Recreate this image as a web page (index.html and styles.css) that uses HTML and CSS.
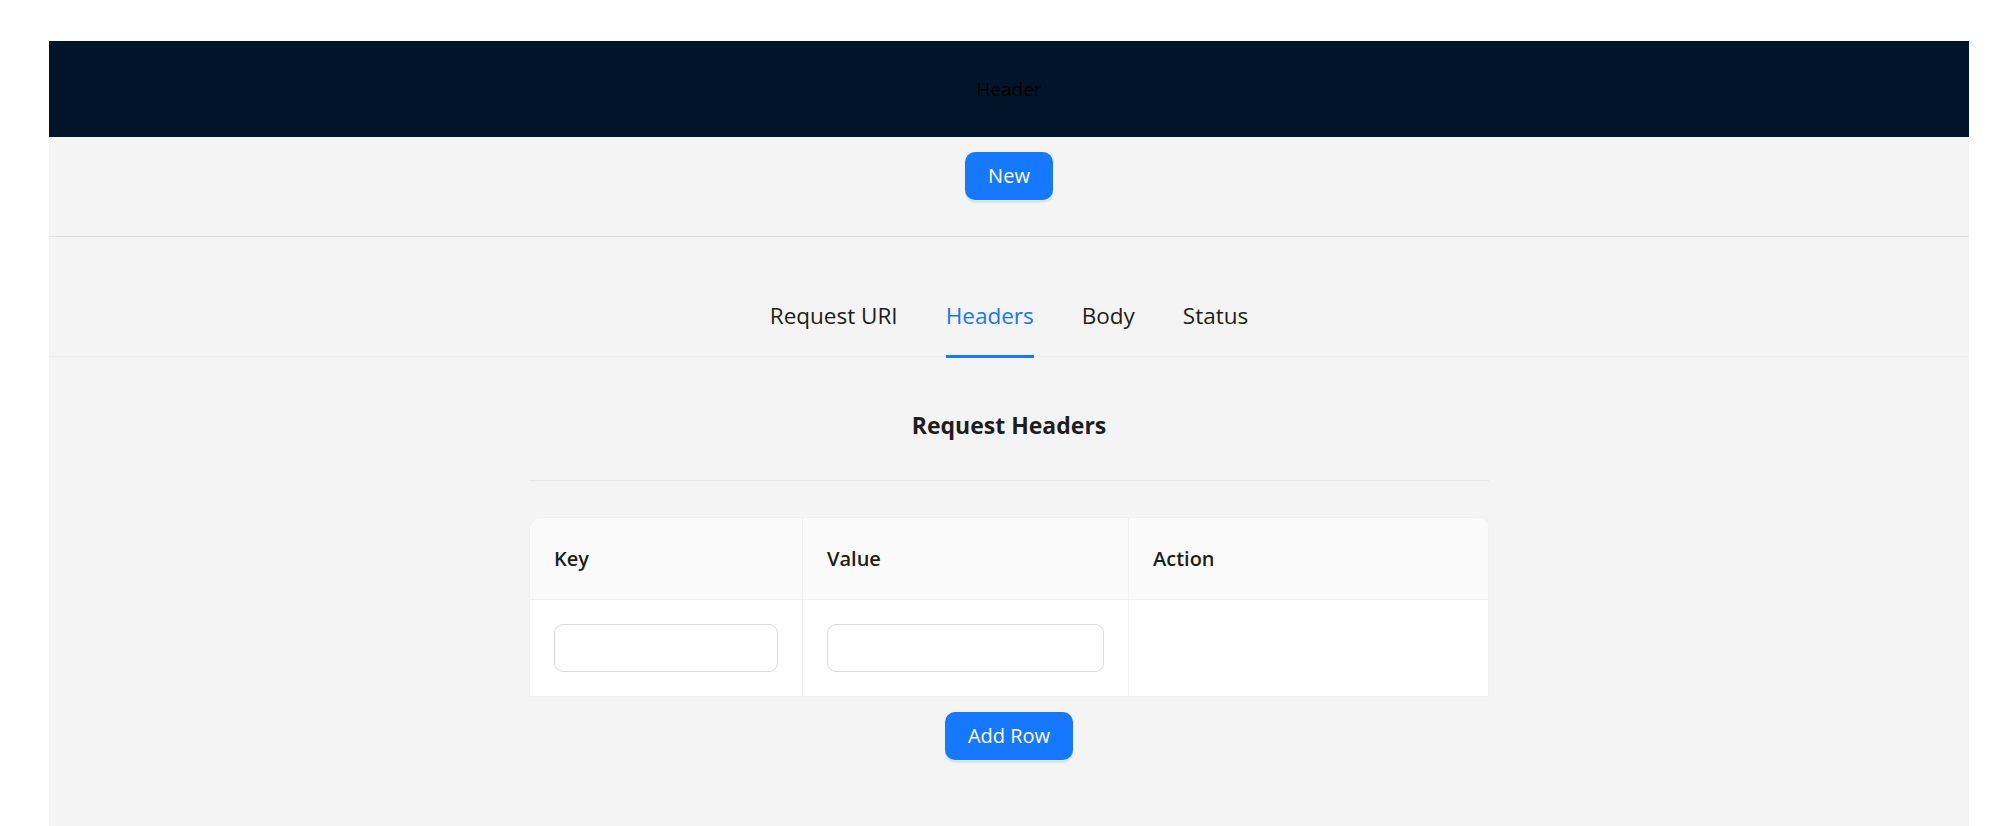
FILE: index.html
```html
<!DOCTYPE html>
<html lang="en">
<head>
<meta charset="utf-8">
<title>Request Builder</title>
<link rel="stylesheet" href="styles.css">
</head>
<body>
<div class="page">
  <div class="layout">
    <header class="app-header">Header</header>
    <section class="toolbar">
      <button class="btn btn-primary" type="button">New</button>
    </section>
    <nav class="tabs">
      <div class="tab">Request URI</div>
      <div class="tab tab-active">Headers</div>
      <div class="tab">Body</div>
      <div class="tab">Status</div>
    </nav>
    <main class="content">
      <h4 class="title">Request Headers</h4>
      <div class="divider"></div>
      <div class="table">
        <div class="th th-first">Key</div>
        <div class="th">Value</div>
        <div class="th th-last">Action</div>
        <div class="td"><input class="input" type="text"></div>
        <div class="td"><input class="input" type="text"></div>
        <div class="td"></div>
      </div>
      <div class="actions">
        <button class="btn btn-primary" type="button">Add Row</button>
      </div>
    </main>
  </div>
</div>
</body>
</html>
```

FILE: styles.css
```css
* { box-sizing: border-box; }

html, body {
  margin: 0;
  padding: 0;
  background: #ffffff;
  font-family: "Open Sans", "Noto Sans", sans-serif;
  color: #1d1d1d;
}

.page {
  padding: 41px 44px 0 49px;
  height: 826px;
  overflow: hidden;
}

.layout {
  background: #f4f4f4;
  min-height: 785px;
  display: flex;
  flex-direction: column;
}

.app-header {
  height: 96px;
  background: #001529;
  color: #000000;
  font-size: 19px;
  display: flex;
  align-items: center;
  justify-content: center;
}

.toolbar {
  display: flex;
  justify-content: center;
  padding: 15px 0 36px;
  border-bottom: 1px solid #e0e0e0;
}

.btn {
  font-family: "Open Sans", "Noto Sans", sans-serif;
  height: 48px;
  padding: 0 22px;
  border: 1px solid transparent;
  border-radius: 10px;
  font-size: 20px;
  line-height: 1;
  cursor: pointer;
}

.btn-primary {
  background: #1677ff;
  color: #ffffff;
  box-shadow: 0 3px 0 rgba(5, 145, 255, 0.12);
}

.tabs {
  display: flex;
  justify-content: center;
  gap: 48px;
  padding-top: 38px;
  border-bottom: 1px solid #ebebeb;
}

.tab {
  position: relative;
  padding: 24px 0;
  font-size: 22.5px;
  line-height: 33px;
  color: #1d1d1d;
}

.tab-active {
  color: #1677ff;
}

.tab-active::after {
  content: "";
  position: absolute;
  left: 0;
  right: 0;
  bottom: -2px;
  height: 3px;
  background: #1677ff;
}

.content {
  width: 960px;
  margin: 0 auto;
  padding-top: 52px;
  display: flex;
  flex-direction: column;
}

.title {
  margin: 0;
  text-align: center;
  font-size: 23px;
  font-weight: 700;
  line-height: 33px;
  color: #1d1d1d;
}

.divider {
  margin-top: 38px;
  height: 1px;
  background: #e6e6e6;
}

.table {
  margin-top: 36px;
  display: grid;
  grid-template-columns: 273px 326px 360px;
  border-left: 1px solid #f0f0f0;
  border-top: 1px solid #f0f0f0;
  border-radius: 12px 12px 0 0;
  overflow: hidden;
}

.th {
  background: #fafafa;
  padding: 24px 24px 24px;
  font-size: 20px;
  font-weight: 600;
  line-height: 33px;
  border-right: 1px solid #f0f0f0;
  border-bottom: 1px solid #f0f0f0;
  color: #1d1d1d;
}

.td {
  background: #ffffff;
  padding: 24px;
  border-right: 1px solid #f0f0f0;
  border-bottom: 1px solid #f0f0f0;
}

.input {
  display: block;
  width: 100%;
  height: 48px;
  border: 1px solid #d9d9d9;
  border-radius: 9px;
  background: #ffffff;
  font-family: "Open Sans", "Noto Sans", sans-serif;
  font-size: 19px;
  padding: 0 16px;
  outline: none;
}

.actions {
  display: flex;
  justify-content: center;
  padding-top: 15px;
}
```
